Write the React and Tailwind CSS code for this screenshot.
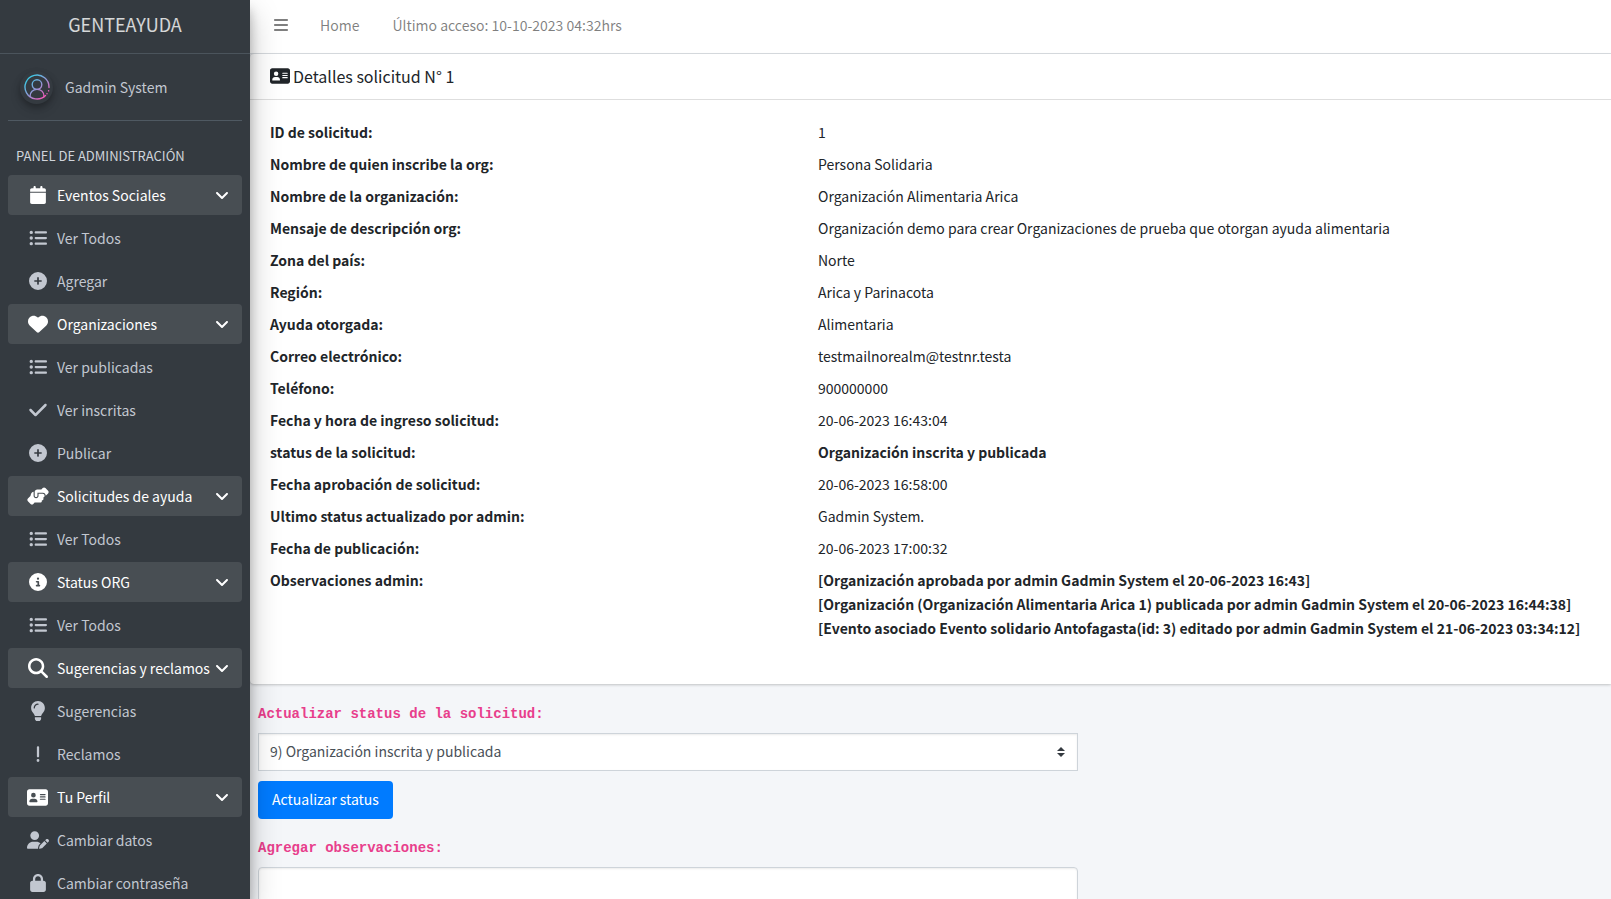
import {
  FaAddressCard, FaAngleDown, FaBars, FaCalendar, FaCheck, FaCircleInfo, FaCirclePlus,
  FaExclamation, FaHandshakeAngle, FaHeart, FaListUl, FaLock, FaMagnifyingGlass, FaUserPen,
} from "react-icons/fa6";
import { FaLightbulb } from "react-icons/fa";

const GROUPS = [
  { label: "Eventos Sociales", icon: FaCalendar, items: [["Ver Todos", FaListUl], ["Agregar", FaCirclePlus]] },
  { label: "Organizaciones", icon: FaHeart, items: [["Ver publicadas", FaListUl], ["Ver inscritas", FaCheck], ["Publicar", FaCirclePlus]] },
  { label: "Solicitudes de ayuda", icon: FaHandshakeAngle, items: [["Ver Todos", FaListUl]] },
  { label: "Status ORG", icon: FaCircleInfo, items: [["Ver Todos", FaListUl]] },
  { label: "Sugerencias y reclamos", icon: FaMagnifyingGlass, items: [["Sugerencias", FaLightbulb], ["Reclamos", FaExclamation]] },
  { label: "Tu Perfil", icon: FaAddressCard, items: [["Cambiar datos", FaUserPen], ["Cambiar contraseña", FaLock]] },
];

const ICON_SIZES = new Map([
  [FaHeart, "size-5"],
  [FaMagnifyingGlass, "size-5"],
  [FaLightbulb, "size-5"],
  [FaCheck, "size-5"],
  [FaAddressCard, "size-[21px]"],
  [FaHandshakeAngle, "size-[22px]"],
  [FaUserPen, "size-[22px]"],
]);

const DETAILS = [
  ["ID de solicitud:", "1"],
  ["Nombre de quien inscribe la org:", "Persona Solidaria"],
  ["Nombre de la organización:", "Organización Alimentaria Arica"],
  ["Mensaje de descripción org:", "Organización demo para crear Organizaciones de prueba que otorgan ayuda alimentaria"],
  ["Zona del país:", "Norte"],
  ["Región:", "Arica y Parinacota"],
  ["Ayuda otorgada:", "Alimentaria"],
  ["Correo electrónico:", "testmailnorealm@testnr.testa"],
  ["Teléfono:", "900000000"],
  ["Fecha y hora de ingreso solicitud:", "20-06-2023 16:43:04"],
  ["status de la solicitud:", <b>Organización inscrita y publicada</b>],
  ["Fecha aprobación de solicitud:", "20-06-2023 16:58:00"],
  ["Ultimo status actualizado por admin:", "Gadmin System."],
  ["Fecha de publicación:", "20-06-2023 17:00:32"],
  [
    "Observaciones admin:",
    <b>
      [Organización aprobada por admin Gadmin System el 20-06-2023 16:43]<br />
      [Organización (Organización Alimentaria Arica 1) publicada por admin Gadmin System el 20-06-2023 16:44:38]<br />
      [Evento asociado Evento solidario Antofagasta(id: 3) editado por admin Gadmin System el 21-06-2023 03:34:12]
    </b>,
  ],
];

function Avatar() {
  return (
    <span className="flex size-[33px] items-center justify-center rounded-full bg-[#343a40] shadow-[0_3px_6px_rgba(0,0,0,0.25),0_6px_12px_rgba(0,0,0,0.12)]">
      <svg viewBox="0 0 26 26" className="size-[26px]" fill="none" stroke="url(#avatar)" strokeWidth="1.4" strokeLinecap="round" aria-hidden="true">
        <defs>
          <linearGradient id="avatar" gradientUnits="userSpaceOnUse" x1="3" y1="3" x2="22" y2="24">
            <stop offset="0" stopColor="#2fd0e6" />
            <stop offset="0.5" stopColor="#8f9ad8" />
            <stop offset="1" stopColor="#ff4fb4" />
          </linearGradient>
        </defs>
        <path d="M25 13.5A12 12 0 1 0 21.5 21.5" />
        <path d="M24.6 16.8v.1M23 19.6v.1" />
        <circle cx="13" cy="10.6" r="4.8" />
        <path d="M6 22.6c0-4.4 3-7.2 7-7.2s7 2.8 7 7.2" />
      </svg>
    </span>
  );
}

function NavIcon({ icon: Icon }) {
  return (
    <span className="mr-[6px] flex w-[27px] shrink-0 justify-center">
      <Icon className={ICON_SIZES.get(Icon) ?? "size-[18px]"} />
    </span>
  );
}

function Sidebar() {
  return (
    <aside className="relative z-10 w-[250px] shrink-0 overflow-hidden bg-[#343a40] text-[#c2c7d0] shadow-[0_14px_28px_rgba(0,0,0,0.25),0_10px_10px_rgba(0,0,0,0.22)]">
      <a href="#" className="flex h-[54px] items-center justify-center border-b border-[#4b545c] pb-[6px] text-lg text-white/80">GENTEAYUDA</a>
      <div className="px-2">
        <a href="#" className="flex h-[67px] items-center gap-3 border-b border-[#4f5962] pl-3">
          <Avatar />
          <span>Gadmin System</span>
        </a>
        <nav className="pt-4">
          <h2 className="px-2 pt-[11px] pb-[11px] text-[13px] leading-4 text-[#d0d4db]">PANEL DE ADMINISTRACIÓN</h2>
          <ul className="flex flex-col gap-[3px]">
            {GROUPS.map(({ label, icon, items }) => (
              <li key={label}>
                <button type="button" className="flex h-10 w-full items-center rounded bg-white/10 pr-3 pl-4 text-white">
                  <NavIcon icon={icon} />
                  <span className="grow text-left whitespace-nowrap">{label}</span>
                  <FaAngleDown className="size-4 shrink-0" />
                </button>
                <ul className="mt-[3px] flex flex-col gap-[3px]">
                  {items.map(([text, itemIcon]) => (
                    <li key={text}>
                      <a href="#" className="flex h-10 items-center pr-3 pl-4">
                        <NavIcon icon={itemIcon} />
                        <span>{text}</span>
                      </a>
                    </li>
                  ))}
                </ul>
              </li>
            ))}
          </ul>
        </nav>
      </div>
    </aside>
  );
}

export default function App() {
  return (
    <div className="flex h-screen overflow-hidden bg-[#f4f6f9] font-['Noto_Sans_CJK_SC',sans-serif] text-sm leading-6 text-[#212529]">
      <Sidebar />
      <main className="min-w-0 grow">
        <header className="flex h-[54px] items-center border-b border-[#dee2e6] bg-white px-[23px] pb-1 text-black/50">
          <button type="button" aria-label="Menú"><FaBars className="size-4" /></button>
          <a href="#" className="ml-[31px]">Home</a>
          <a href="#" className="ml-[33px]">Último acceso: 10-10-2023 04:32hrs</a>
        </header>
        <section className="rounded-l bg-white shadow-[0_0_1px_rgba(0,0,0,0.13),0_1px_3px_rgba(0,0,0,0.2)]">
          <h1 className="flex h-[46px] items-center gap-[3px] border-b border-black/13 px-5 pb-[2px] text-base">
            <FaAddressCard className="size-5" />
            Detalles solicitud N° 1
          </h1>
          <dl className="px-5 pt-4 pb-10">
            {DETAILS.map(([term, value]) => (
              <div key={term} className="grid grid-cols-[548fr_773fr] py-1">
                <dt className="font-bold">{term}</dt>
                <dd className="whitespace-nowrap">{value}</dd>
              </div>
            ))}
          </dl>
        </section>
        <form className="w-[836px] max-w-full px-2 pt-[18px]">
          <label htmlFor="status" className="block font-['Liberation_Mono',monospace] text-sm leading-6 font-bold text-[#e83e8c]">Actualizar status de la solicitud:</label>
          <div className="relative mt-[7px]">
            <select id="status" className="block h-[38px] w-full appearance-none border border-[#ced4da] bg-white px-[11px] pb-[2px] text-[#495057] shadow-[inset_0_1px_2px_rgba(0,0,0,0.075)]">
              <option>9) Organización inscrita y publicada</option>
            </select>
            <svg viewBox="0 0 4 5" className="pointer-events-none absolute top-[14px] right-[13px] h-[10px] w-2" fill="#343a40" aria-hidden="true">
              <path d="M2 0L0 2h4zm0 5L0 3h4z" />
            </svg>
          </div>
          <button type="button" className="mt-[10px] h-[38px] rounded bg-[#007bff] px-[14px] pb-[2px] text-white">Actualizar status</button>
          <label htmlFor="notes" className="mt-[17px] block font-['Liberation_Mono',monospace] text-sm leading-6 font-bold text-[#e83e8c]">Agregar observaciones:</label>
          <textarea id="notes" rows={4} className="mt-[7px] block w-full rounded border border-[#ced4da] bg-white px-3 py-[6px] shadow-[inset_0_1px_2px_rgba(0,0,0,0.075)]" />
        </form>
      </main>
    </div>
  );
}
